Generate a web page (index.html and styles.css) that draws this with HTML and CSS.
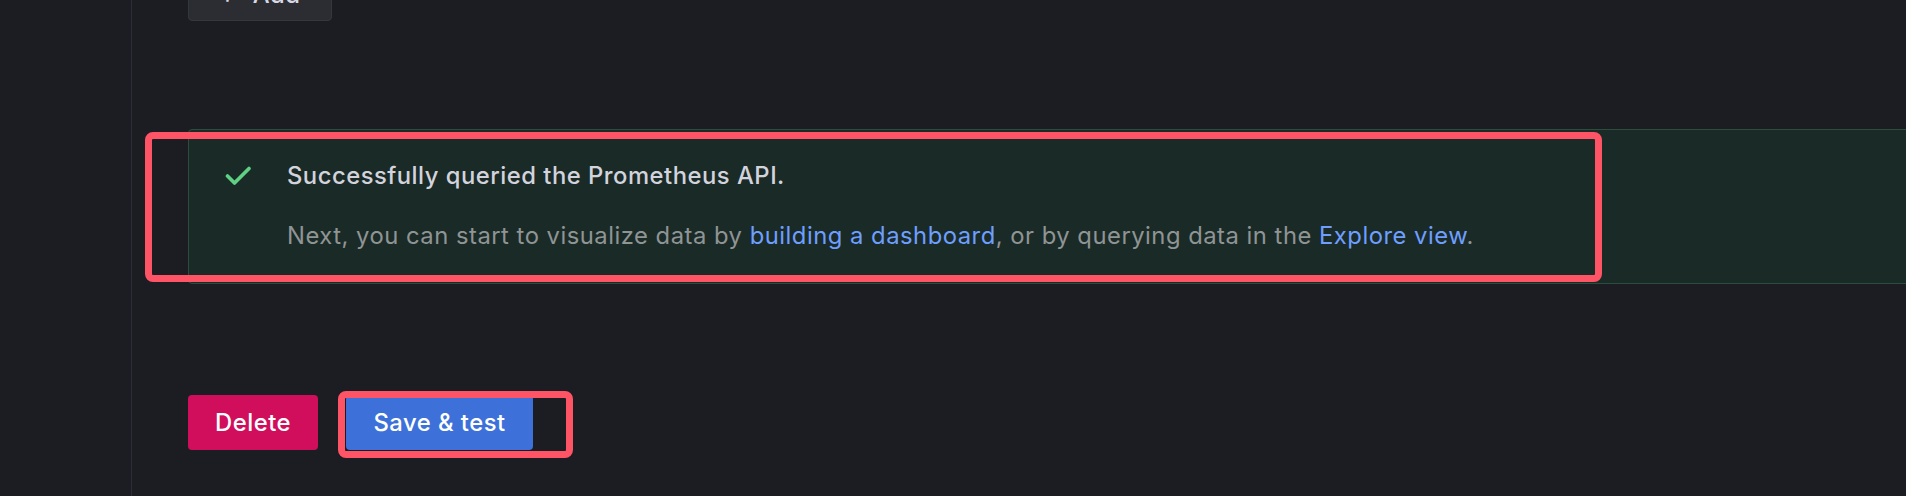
FILE: index.html
```html
<!DOCTYPE html>
<html lang="en">
<head>
<meta charset="utf-8">
<title>Data source settings</title>
<link rel="stylesheet" href="styles.css">
</head>
<body>
<div class="layout">
  <aside class="sidebar"></aside>
  <main class="main">
    <button class="btn btn-secondary add-btn"><span class="plus">+</span> Add</button>

    <div class="alert-wrap">
      <div class="alert">
        <svg class="alert-icon" width="26" height="20" viewBox="0 0 26 20" aria-hidden="true">
          <polyline points="2.5,10 9.5,17 24,2.5" fill="none" stroke="#5fd184" stroke-width="3.6" stroke-linecap="round" stroke-linejoin="round"/>
        </svg>
        <div class="alert-content">
          <div class="alert-title">Successfully queried the Prometheus API.</div>
          <div class="alert-body">Next, you can start to visualize data by <a class="link" href="#">building a dashboard</a>, or by querying data in the <a class="link" href="#">Explore view</a>.</div>
        </div>
      </div>
      <div class="highlight highlight-alert"></div>
    </div>

    <div class="actions">
      <button class="btn btn-destructive">Delete</button>
      <div class="save-wrap">
        <button class="btn btn-primary save-btn">Save &amp; test</button>
        <div class="highlight highlight-save"></div>
      </div>
    </div>
  </main>
</div>
</body>
</html>
```
FILE: styles.css
```css
* { box-sizing: border-box; }

html, body {
  margin: 0;
  padding: 0;
  height: 100%;
  overflow: hidden;
  background: #1b1d22;
  font-family: Inter, "Noto Sans", "Liberation Sans", sans-serif;
  color: #ccccdc;
  letter-spacing: 0.5px;
}

.layout {
  display: flex;
  height: 496px;
}

.sidebar {
  width: 132px;
  flex: 0 0 132px;
  border-right: 1px solid #2b2e35;
}

.main {
  flex: 1;
  padding-left: 56px;
  display: flex;
  flex-direction: column;
  align-items: flex-start;
  min-width: 0;
}

.btn {
  font-family: Inter, "Noto Sans", "Liberation Sans", sans-serif;
  font-size: 23.8px;
  font-weight: 500;
  letter-spacing: 0.5px;
  height: 55px;
  line-height: 55px;
  border-radius: 4px;
  border: none;
  padding: 0 27px;
  color: #ffffff;
  cursor: pointer;
}

.add-btn {
  margin-top: -34px;
  width: 144px;
  background: #2c2d33;
  border: 1px solid #35373e;
  color: #d8d8e4;
  text-align: center;
}

.plus {
  margin-right: 10px;
}

.alert-wrap {
  position: relative;
  margin-top: 108px;
}

.alert {
  width: 1760px;
  display: flex;
  align-items: flex-start;
  background: #1a2a26;
  border: 1px solid #2a4e3b;
  border-radius: 4px;
  padding: 28px 0 29px 36px;
}

.alert-icon {
  flex: 0 0 auto;
  margin-top: 8px;
  margin-right: 36px;
}

.alert-title {
  font-size: 23.8px;
  font-weight: 500;
  line-height: 36px;
  color: #d2d3dd;
}

.alert-body {
  margin-top: 24px;
  font-size: 23.8px;
  line-height: 36px;
  color: #8f9495;
}

.link {
  color: #6e9fff;
  text-decoration: none;
}

.highlight {
  position: absolute;
  border: 7px solid #ff5366;
  border-radius: 8px;
  pointer-events: none;
}

.highlight-alert {
  left: -43px;
  top: 3px;
  width: 1457px;
  height: 150px;
}

.actions {
  display: flex;
  align-items: flex-start;
  gap: 28px;
  margin-top: 111px;
}

.btn-destructive {
  background: #d10e5c;
  width: 130px;
  padding: 0;
  text-align: center;
}

.save-wrap {
  position: relative;
}

.btn-primary {
  background: #3d71d9;
  width: 187px;
  padding: 0;
  text-align: center;
}

.highlight-save {
  left: -8px;
  top: -4px;
  width: 235px;
  height: 67px;
}
```
